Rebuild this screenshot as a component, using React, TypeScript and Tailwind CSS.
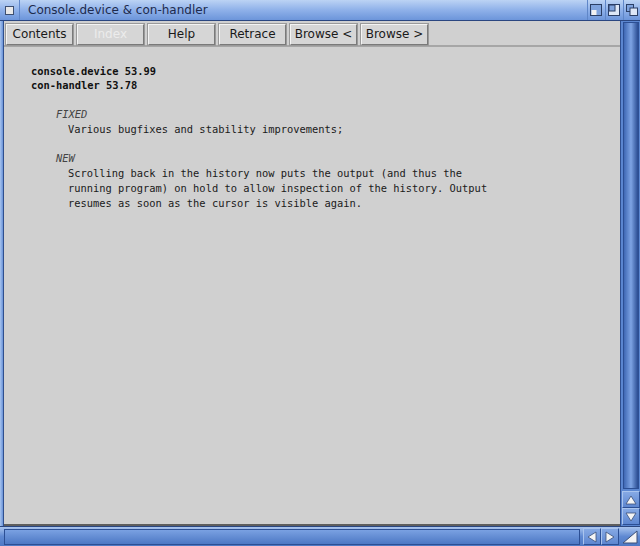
const mono = { fontFamily: '"DejaVu Sans Mono", "Liberation Mono", monospace' };

function ToolButton({ label, disabled }: { label: string; disabled?: boolean }) {
  return (
    <div
      className={`flex h-[21px] w-[67px] items-center justify-center border border-t-[#f4f4f4] border-l-[#f4f4f4] border-r-[#7a7a7a] border-b-[#7a7a7a] bg-[#d6d6d6] text-[12px] outline outline-1 outline-[#9a9a9a] ${
        disabled ? 'text-[#ececec]' : 'text-[#1a1a1a]'
      }`}
    >
      {label}
    </div>
  );
}

function TitleGadget({ kind }: { kind: 'depth' | 'zoom' | 'iconify' }) {
  return (
    <div className="flex h-[20px] w-[16px] items-center justify-center border-l border-[#5f86c8]">
      <svg width="12" height="12" viewBox="0 0 12 12">
        {kind === 'depth' && (
          <>
            <rect x="0.5" y="0.5" width="11" height="11" fill="#7fa3de" stroke="#2b3f66" />
            <rect x="1.5" y="6" width="5" height="5" fill="#f2f2f2" />
          </>
        )}
        {kind === 'zoom' && (
          <>
            <rect x="0.5" y="0.5" width="11" height="11" fill="#dde7f7" stroke="#2b3f66" />
            <rect x="1" y="1" width="6" height="6" fill="#7fa3de" stroke="#2b3f66" />
          </>
        )}
        {kind === 'iconify' && (
          <>
            <rect x="0.5" y="0.5" width="7" height="7" fill="#7fa3de" stroke="#2b3f66" />
            <rect x="4" y="4" width="7.5" height="7.5" fill="#dde7f7" stroke="#2b3f66" />
          </>
        )}
      </svg>
    </div>
  );
}

function ArrowBox({ dir }: { dir: 'up' | 'down' | 'left' | 'right' }) {
  const pts = {
    up: '6,2 11,10 1,10',
    down: '1,2 11,2 6,10',
    left: '10,1 10,11 2,6',
    right: '2,1 2,11 10,6',
  }[dir];
  return (
    <div className="flex h-[17px] w-[18px] items-center justify-center border border-t-[#a9c4ee] border-l-[#a9c4ee] border-r-[#2c4f94] border-b-[#2c4f94] bg-gradient-to-b from-[#86a9e4] to-[#5d86d0]">
      <svg width="12" height="12" viewBox="0 0 12 12">
        <polygon points={pts} fill="#f4f4f4" stroke="#3a4f78" strokeWidth="0.8" />
      </svg>
    </div>
  );
}

export default function App() {
  return (
    <div className="flex h-[546px] w-[640px] flex-col overflow-hidden bg-[#5b86d0]" style={{ fontFamily: '"DejaVu Sans", "Noto Sans", sans-serif' }}>
      {/* title bar */}
      <div className="flex h-[21px] shrink-0 items-center border-b border-[#2a4680] bg-gradient-to-b from-[#bcd3f4] via-[#8fb1e9] to-[#6c95da]">
        <div className="flex h-full w-[20px] items-center justify-center border-r border-[#5f86c8]">
          <div className="h-[9px] w-[9px] border border-[#3d4f70] bg-[#e8e8e8]" />
        </div>
        <div className="ml-[8px] flex-1 text-[12px] text-[#1d2a4d]">Console.device &amp; con-handler</div>
        <div className="mr-[1px] flex items-center gap-[2px]">
          <TitleGadget kind="depth" />
          <TitleGadget kind="zoom" />
          <TitleGadget kind="iconify" />
        </div>
      </div>

      <div className="flex min-h-0 flex-1">
        {/* left border */}
        <div className="w-[4px] shrink-0 border-r border-[#2f4f8e] bg-gradient-to-r from-[#a8c4ee] to-[#6a93d8]" />

        {/* main panel */}
        <div className="flex min-w-0 flex-1 flex-col bg-[#d0d0d0]">
          <div className="flex h-[26px] shrink-0 items-center gap-[4px] border-b-2 border-[#a6a6a6] pl-[2px] pt-[2px]">
            <ToolButton label="Contents" />
            <ToolButton label="Index" disabled />
            <ToolButton label="Help" />
            <ToolButton label="Retrace" />
            <ToolButton label="Browse <" />
            <ToolButton label="Browse >" />
          </div>

          <div className="flex-1 whitespace-pre pl-[27px] pt-[17px] text-[10.4px] leading-[15px] text-[#1a1a1a]" style={mono}>
            <div className="font-bold leading-[14px] text-[#111]">console.device 53.99</div>
            <div className="font-bold leading-[14px] text-[#111]">con-handler 53.78</div>
            <div className="mt-[15px] pl-[25px] italic text-[#444]">FIXED</div>
            <div className="pl-[37px]">Various bugfixes and stability improvements;</div>
            <div className="mt-[14px] pl-[25px] italic text-[#444]">NEW</div>
            <div className="pl-[37px]">Scrolling back in the history now puts the output (and thus the</div>
            <div className="pl-[37px]">running program) on hold to allow inspection of the history. Output</div>
            <div className="pl-[37px]">resumes as soon as the cursor is visible again.</div>
          </div>

          <div className="h-[2px] shrink-0 bg-[#5e5e5e]" />
        </div>

        {/* right scrollbar */}
        <div className="flex w-[20px] shrink-0 flex-col border-l border-[#2f4f8e] bg-[#5b86d0] pl-[1px]">
          <div className="mx-[1px] mt-[1px] flex-1 border border-[#2c4f94] bg-gradient-to-r from-[#3f68b4] via-[#7ea4e4] to-[#2a4c92]" />
          <div className="mt-[2px]">
            <ArrowBox dir="up" />
          </div>
          <div className="mb-[1px]">
            <ArrowBox dir="down" />
          </div>
        </div>
      </div>

      {/* bottom bar */}
      <div className="flex h-[20px] shrink-0 items-center border-t border-[#2a4680] bg-gradient-to-b from-[#a9c4ee] via-[#5f89d2] to-[#4d78c4]">
        <div className="ml-[4px] h-[16px] flex-1 border border-[#2c4f94] bg-gradient-to-b from-[#7aa1e2] to-[#4d78c4]" />
        <div className="ml-[3px] flex">
          <ArrowBox dir="left" />
          <ArrowBox dir="right" />
        </div>
        <div className="flex h-full w-[21px] items-center justify-center">
          <svg width="16" height="14" viewBox="0 0 16 14">
            <polygon points="15,1 15,13 1,13" fill="#f4f4f4" stroke="#3a4f78" strokeWidth="1" />
          </svg>
        </div>
      </div>
    </div>
  );
}
